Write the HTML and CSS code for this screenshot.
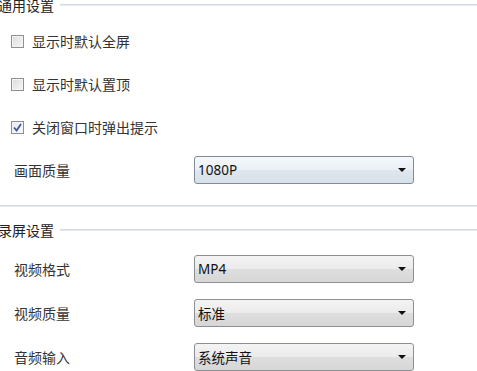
FILE: index.html
```html
<!DOCTYPE html>
<html lang="zh-CN">

<head>
    <meta charset="UTF-8">
    <meta name="viewport" content="width=device-width, initial-scale=1.0">
    <title>设置</title>
    <link rel="stylesheet" href="styles.css">
</head>

<body>
    <div class="panel">
        <div class="group">
            <div class="group-title"><span>通用设置</span></div>
            <div class="rows">
                <label class="check-row"><span class="box"></span>显示时默认全屏</label>
                <label class="check-row"><span class="box"></span>显示时默认置顶</label>
                <label class="check-row"><span class="box checked">
                    <svg width="9" height="9" viewBox="0 0 9 9"><path d="M1 4.5 L3.6 7.5 L8 1" fill="none" stroke="#3d5a9c" stroke-width="1.8"/></svg>
                </span>关闭窗口时弹出提示</label>
                <div class="field-row">
                    <span class="field-label">画面质量</span>
                    <div class="dropdown focus"><span>1080P</span><i class="arrow"></i></div>
                </div>
            </div>
        </div>

        <div class="sep"></div>

        <div class="group">
            <div class="group-title"><span>录屏设置</span></div>
            <div class="rows wide">
                <div class="field-row">
                    <span class="field-label">视频格式</span>
                    <div class="dropdown"><span>MP4</span><i class="arrow"></i></div>
                </div>
                <div class="field-row">
                    <span class="field-label">视频质量</span>
                    <div class="dropdown"><span>标准</span><i class="arrow"></i></div>
                </div>
                <div class="field-row">
                    <span class="field-label">音频输入</span>
                    <div class="dropdown"><span>系统声音</span><i class="arrow"></i></div>
                </div>
            </div>
        </div>
    </div>
</body>

</html>
```

FILE: styles.css
```css
body {
    margin: 0;
    background: #fff;
    font-family: "Noto Sans", "Noto Sans CJK SC", sans-serif;
    font-size: 14px;
    color: #333;
    overflow: hidden;
}

.panel {
    margin-top: -5px;
    margin-left: -2px;
    width: 480px;
}

.group-title {
    display: flex;
    align-items: center;
    height: 20px;
}

.group-title span {
    white-space: nowrap;
    padding-right: 6px;
    color: #222;
}

.group-title::after {
    content: "";
    flex: 1;
    border-top: 1px solid #d3dce5;
    border-bottom: 1px solid #e3e9ef;
}

.rows {
    display: flex;
    flex-direction: column;
    gap: 15px;
    padding-top: 12px;
}

.rows.wide {
    gap: 16px;
    padding-top: 15px;
}

.check-row {
    display: flex;
    align-items: center;
    height: 28px;
    padding-left: 13px;
}

.box {
    box-sizing: border-box;
    width: 13px;
    height: 13px;
    margin-right: 8px;
    border: 1px solid #8f8f8f;
    background: linear-gradient(135deg, #dcdcdc, #f6f6f6);
    box-shadow: inset 0 0 0 1px #f4f4f4;
    display: flex;
    align-items: center;
    justify-content: center;
}

.box.checked {
    background: linear-gradient(135deg, #e4e8ee, #fafbfc);
}

.field-row {
    display: flex;
    align-items: center;
    height: 28px;
    padding-left: 16px;
}

.field-label {
    width: 180px;
}

.dropdown {
    box-sizing: border-box;
    width: 220px;
    height: 28px;
    border: 1px solid #8c8f94;
    border-radius: 3px;
    background: linear-gradient(#f4f4f4, #ebebeb 48%, #dedede 52%, #d6d6d6);
    display: flex;
    align-items: center;
    justify-content: space-between;
    padding: 0 4px 0 3px;
    color: #111;
    font-size: 13.5px;
}

.dropdown.focus {
    border-color: #7f8b99;
    background: linear-gradient(#f5f8fb, #eaf0f6 48%, #dfe6ee 52%, #d8e0e9);
}

.arrow {
    width: 0;
    height: 0;
    margin-right: 3px;
    border-left: 4px solid transparent;
    border-right: 4px solid transparent;
    border-top: 4px solid #111;
}

.sep {
    margin: 21px 0 13px;
    border-top: 1px solid #d3dce5;
    border-bottom: 1px solid #e3e9ef;
}
```
